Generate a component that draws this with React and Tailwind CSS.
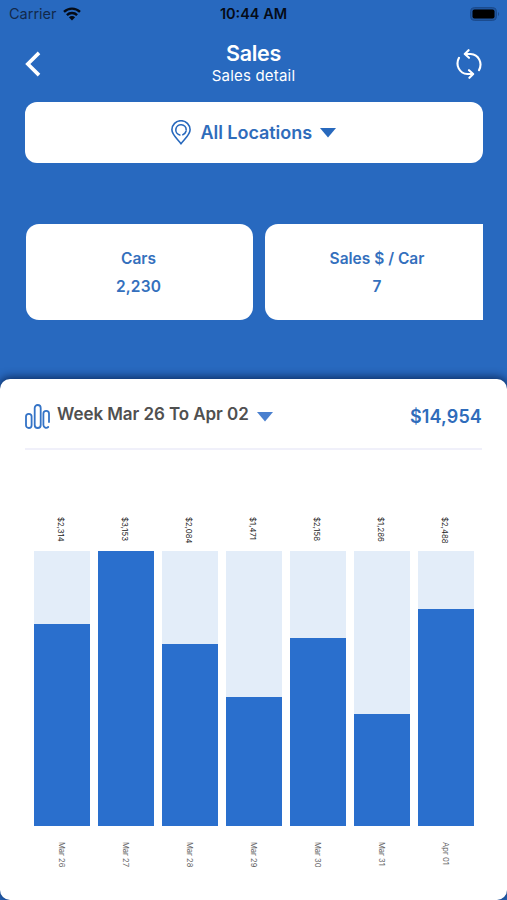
import React from "react";

const DAILY_SALES = [
  { day: "Mar 26", total: 2314 },
  { day: "Mar 27", total: 3153 },
  { day: "Mar 28", total: 2084 },
  { day: "Mar 29", total: 1471 },
  { day: "Mar 30", total: 2158 },
  { day: "Mar 31", total: 1286 },
  { day: "Apr 01", total: 2488 },
];

const formatMoney = (value) => `$${value.toLocaleString("en-US")}`;

const WifiIcon = () => (
  <svg width="18" height="14" viewBox="0 0 18 14" fill="none" stroke="#050b16" strokeWidth="2.4">
    <path d="M1 4.9a11.5 11.5 0 0 1 16 0" />
    <path d="M3.9 8.1a7.3 7.3 0 0 1 10.2 0" />
    <path d="M9 13.4 5.9 10.3a4.4 4.4 0 0 1 6.2 0Z" fill="#050b16" stroke="none" />
  </svg>
);

const BatteryIcon = () => (
  <svg width="30" height="14" viewBox="0 0 30 14">
    <rect x="0.5" y="0.5" width="26" height="13" rx="4" fill="#1f559f" stroke="#1b4b8e" />
    <rect x="2.5" y="2.5" width="22" height="9" rx="2" fill="#000" />
    <path d="M28 5v4c1.4-.6 1.4-3.4 0-4Z" fill="#1b4b8e" />
  </svg>
);

const BackIcon = () => (
  <svg width="16" height="26" viewBox="0 0 16 26" fill="none" stroke="#fff" strokeWidth="3.6">
    <path d="M14 1.9 2.8 13 14 24.1" />
  </svg>
);

const RefreshIcon = () => (
  <svg width="28" height="30" viewBox="0 0 28 30" fill="none" stroke="#fff" strokeWidth="2.1" strokeLinecap="round" strokeLinejoin="round">
    <path d="M4 8.8C.2 15.8 4.2 24.6 12.4 25h5" />
    <path d="M14 21.2 18.2 25l-3.8 3.8" />
    <path d="M24 21.2C27.8 14.2 23.8 5.4 15.6 5h-5" />
    <path d="M14 8.8 9.8 5l3.8-3.8" />
  </svg>
);

const PinIcon = () => (
  <svg width="20" height="25" viewBox="0 0 20 25" fill="none" stroke="#2869bd" strokeWidth="1.6" strokeLinecap="round" strokeLinejoin="round">
    <path d="M10 23.8C7.3 19.7.9 15 .9 9.8a9.1 9.1 0 0 1 18.2 0c0 5.2-6.4 9.9-9.1 14Z" />
    <path d="M8.8 15a5.2 5.2 0 1 1 6.4-5.1" />
    <path d="M15 11.2a5.2 5.2 0 0 1-3.2 3.5" />
  </svg>
);

const WaveIcon = () => (
  <svg width="25" height="25" viewBox="0 0 25 25" fill="none" stroke="#3473c6" strokeWidth="1.8" strokeLinecap="round">
    <rect x="1" y="9.8" width="5.6" height="14.2" rx="2.8" />
    <rect x="9.7" y="1" width="6" height="23" rx="3" />
    <path d="M24 18V9.6a2.8 2.8 0 0 0-5.6 0v11.5a2.8 2.8 0 0 0 4.8 1.9" />
  </svg>
);

const Caret = ({ color }) => (
  <svg width="16" height="10" viewBox="0 0 16 10">
    <path d="M0 0h16L8 9.5Z" fill={color} />
  </svg>
);

const StatCard = ({ label, value }) => (
  <div className="flex h-24 w-[227px] shrink-0 flex-col items-center rounded-[13px] bg-white pt-[25px] pr-0.5 text-[15.5px] leading-5 font-semibold text-[#3470bd] last:w-[224px] last:rounded-r-none last:pr-0">
    <p>{label}</p>
    <p className="mt-2 tracking-[0.15px]">{value}</p>
  </div>
);

const SalesChart = () => {
  const max = Math.max(...DAILY_SALES.map((d) => d.total));

  return (
    <div className="ml-[33.5px] flex w-[441px] justify-between pt-[67px]">
      {DAILY_SALES.map((d) => (
        <div key={d.day} className="flex w-14 flex-col items-center">
          <div className="mr-[2px] flex h-[34px] text-[7.8px] leading-[10px] text-[#222] [writing-mode:vertical-rl]">
            {formatMoney(d.total)}
          </div>
          <div className="flex h-[274.5px] w-full items-end bg-[#e3edf9]">
            <div
              className="w-full bg-[#2a6fcd]"
              style={{ height: `${(d.total / max) * 100}%` }}
            />
          </div>
          <div className="mt-4 mr-[2px] text-[7.6px] leading-[10px] text-[#666] [writing-mode:vertical-rl]">
            {d.day}
          </div>
        </div>
      ))}
    </div>
  );
};

const App = () => {
  return (
    <div className="flex h-[900px] w-[507px] flex-col overflow-hidden bg-[#2869bf] font-['Inter',sans-serif]">
      {/* Status bar */}
      <div className="grid h-7 shrink-0 grid-cols-3 items-center pr-[7px] pl-[9px] text-[#050b16]">
        <div className="flex items-center gap-1.5 text-[14.5px] text-[#12294c]">
          <span>Carrier</span>
          <WifiIcon />
        </div>
        <p className="pr-0.5 text-center text-[14.5px] font-semibold whitespace-nowrap">10:44 AM</p>
        <div className="flex justify-end">
          <BatteryIcon />
        </div>
      </div>

      {/* Header */}
      <div className="flex h-[74px] shrink-0 items-start justify-between pr-6 pl-[25px]">
        <button className="mt-[23px] w-7">
          <BackIcon />
        </button>
        <div className="pt-3 pr-px text-center text-white">
          <h1 className="text-[21.5px] leading-[26px] font-semibold tracking-[-0.3px]">Sales</h1>
          <p className="text-[15px] leading-5 tracking-[0.2px]">Sales detail</p>
        </div>
        <button className="mt-[21px]">
          <RefreshIcon />
        </button>
      </div>

      {/* Location picker */}
      <button className="mx-[25px] flex h-[61px] w-[457.5px] shrink-0 items-center justify-center rounded-[12px] bg-white pr-px">
        <PinIcon />
        <span className="mr-2 ml-2.5 text-lg font-semibold tracking-[-0.05px] text-[#2f6cbb]">All Locations</span>
        <Caret color="#2869bd" />
      </button>

      {/* Metric cards */}
      <div className="mt-[61px] mr-6 ml-[26px] flex shrink-0 gap-3 overflow-hidden">
        <StatCard label="Cars" value="2,230" />
        <StatCard label="Sales $ / Car" value="7" />
      </div>

      {/* Weekly sales */}
      <div className="mt-[59px] flex-1 rounded-[10px] bg-white shadow-[0_-1px_8px_1px_rgba(0,20,60,0.7)]">
        <div className="mx-[25px] flex h-[71px] items-center justify-between border-b-2 border-[#f0f0fa] pt-1.5">
          <div className="flex items-center">
            <WaveIcon />
            <span className="mr-2 mb-[3px] ml-[7px] text-[17px] font-semibold tracking-[-0.07px] text-[#505050]">
              Week Mar 26 To Apr 02
            </span>
            <Caret color="#4a80cf" />
          </div>
          <span className="text-lg font-semibold tracking-[0.15px] text-[#2f6cbb]">$14,954</span>
        </div>
        <SalesChart />
      </div>
    </div>
  );
};

export default App;
